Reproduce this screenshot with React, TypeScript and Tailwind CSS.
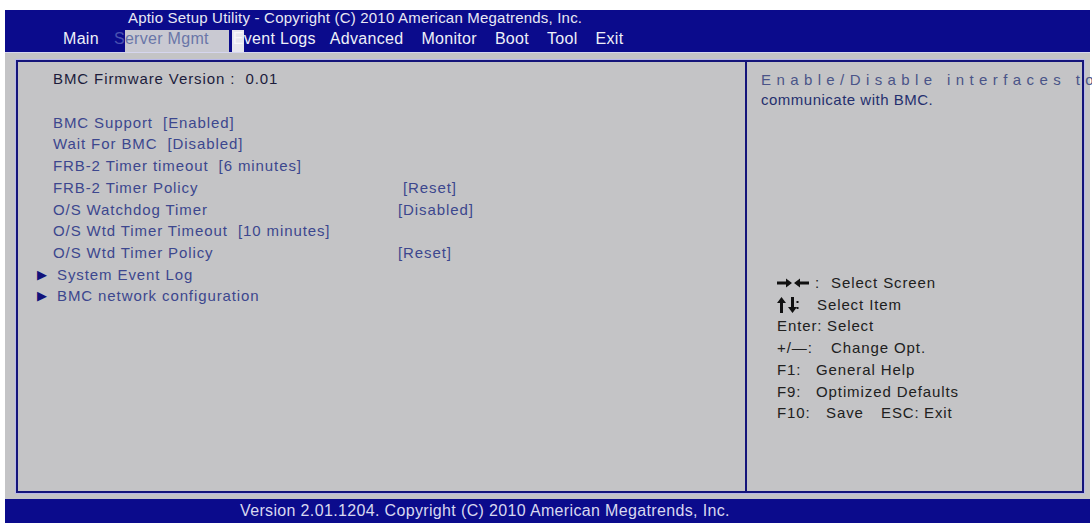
import React from "react";

const items = [
  { label: "BMC Support  [Enabled]" },
  { label: "Wait For BMC  [Disabled]" },
  { label: "FRB-2 Timer timeout  [6 minutes]" },
  { label: "FRB-2 Timer Policy", value: "[Reset]", offset: "pl-[350px]" },
  { label: "O/S Watchdog Timer", value: "[Disabled]", offset: "pl-[345px]" },
  { label: "O/S Wtd Timer Timeout  [10 minutes]" },
  { label: "O/S Wtd Timer Policy", value: "[Reset]", offset: "pl-[345px]" },
];

function LeftRight() {
  return (
    <svg width="32" height="10" viewBox="0 0 32 10">
      <path d="M0 3.5h9V0.5l6 4.5-6 4.5V6.5H0z" fill="#111" />
      <path d="M32 3.5h-9V0.5l-6 4.5 6 4.5V6.5h9z" fill="#111" />
    </svg>
  );
}

function UpDown() {
  return (
    <svg width="22" height="16" viewBox="0 0 22 16">
      <path d="M3 16V6H0l4.5-6L9 6H6v10z" fill="#111" />
      <path d="M14 0v10h-3l4.5 6 4.5-6h-3V0z" fill="#111" />
      <rect x="19.5" y="4" width="2" height="2" fill="#111" />
      <rect x="19.5" y="10" width="2" height="2" fill="#111" />
    </svg>
  );
}

export default function App() {
  return (
    <div
      className="w-[1092px] h-[523px] bg-white pt-[10px] pl-[5px] pr-[2px] flex flex-col overflow-hidden"
      style={{ fontFamily: '"Liberation Sans", Arial, sans-serif' }}
    >
      {/* Header */}
      <div className="h-[42px] bg-[#0b0b8c] flex flex-col">
        <div className="h-[14px] flex items-center pl-[123px] text-[15px] tracking-[0.2px] text-[#e8e8f4] leading-none">
          Aptio Setup Utility - Copyright (C) 2010 American Megatrends, Inc.
        </div>
        <div className="flex-1 flex items-end text-[16px] tracking-[0.3px] leading-none text-[#eef0f8]">
          <span className="pl-[58px] pb-[5px]">Main</span>
          <span className="pl-[15px] pb-[5px] text-[#4a52b0]">S</span>
          <span className="h-[22px] bg-[#c9c9d2] text-[#6a76a8] flex items-end pb-[5px] pr-[20px]">erver Mgmt</span>
          <span className="h-[22px] bg-[#e6e6ee] text-[#f6f6fa] flex items-end pb-[5px] pl-[1px] ml-[3px]">E</span>
          <span className="pb-[5px]">vent Logs</span>
          <span className="pl-[14px] pb-[5px]">Advanced</span>
          <span className="pl-[18px] pb-[5px]">Monitor</span>
          <span className="pl-[18px] pb-[5px]">Boot</span>
          <span className="pl-[18px] pb-[5px]">Tool</span>
          <span className="pl-[18px] pb-[5px]">Exit</span>
        </div>
      </div>

      {/* Body */}
      <div className="flex-1 bg-[#c4c4c6] pt-[7px] pl-[11px] pr-[6px] pb-[6px] border-t border-[#d6d6ee]">
        <div className="h-full flex border-2 border-[#14147a] shadow-[0_0_0_1px_#b8b8e8]">
          {/* Left panel */}
          <div className="w-[727px] shrink-0 pl-[35px] pt-[6px] text-[15px] tracking-[0.9px] leading-[21.7px] text-[#3c478e]">
            <div className="text-[#1c1c3c] whitespace-pre">BMC Firmware Version :  0.01</div>
            <div className="h-[22px]" />
            {items.map((it) => (
              <div key={it.label} className="flex whitespace-pre">
                <span className={it.value ? "w-[0px]" : ""}>{it.label}</span>
                {it.value && <span className={it.offset}>{it.value}</span>}
              </div>
            ))}
            <div className="flex items-center -ml-[16px]">
              <span className="text-[#12127a] text-[13px] w-[20px]">&#9654;</span>
              <span>System Event Log</span>
            </div>
            <div className="flex items-center -ml-[16px]">
              <span className="text-[#12127a] text-[13px] w-[20px]">&#9654;</span>
              <span>BMC network configuration</span>
            </div>
          </div>

          {/* Right panel */}
          <div className="flex-1 min-w-0 border-l-2 border-[#14147a] flex flex-col pl-[14px] pt-[8px]">
            <div className="text-[15px] leading-[20px] tracking-[5.4px] text-[#4a5488] whitespace-nowrap">
              Enable/Disable interfaces to
            </div>
            <div className="text-[15px] leading-[20px] tracking-[0.5px] text-[#25306e]">communicate with BMC.</div>
            <div className="mt-[162px] pl-[16px] text-[15px] tracking-[0.9px] leading-[21.7px] text-[#202020] whitespace-nowrap">
              <div className="flex items-center">
                <LeftRight />
                <span className="w-[22px] pl-[6px]">:</span>
                <span>Select Screen</span>
              </div>
              <div className="flex items-center">
                <span className="w-[40px]"><UpDown /></span>
                <span>Select Item</span>
              </div>
              <div className="flex">
                <span className="w-[50px]">Enter:</span>
                <span>Select</span>
              </div>
              <div className="flex">
                <span className="w-[54px]">+/—:</span>
                <span>Change Opt.</span>
              </div>
              <div className="flex">
                <span className="w-[39px]">F1:</span>
                <span>General Help</span>
              </div>
              <div className="flex">
                <span className="w-[39px]">F9:</span>
                <span>Optimized Defaults</span>
              </div>
              <div className="flex">
                <span className="w-[49px]">F10:</span>
                <span className="w-[55px]">Save</span>
                <span className="w-[43px]">ESC:</span>
                <span>Exit</span>
              </div>
            </div>
          </div>
        </div>
      </div>

      {/* Footer */}
      <div className="h-[24px] bg-[#0b0b8c] flex items-center pl-[235px] text-[16px] tracking-[0.35px] text-[#d8d8f0] leading-none">
        Version 2.01.1204. Copyright (C) 2010 American Megatrends, Inc.
      </div>
    </div>
  );
}
